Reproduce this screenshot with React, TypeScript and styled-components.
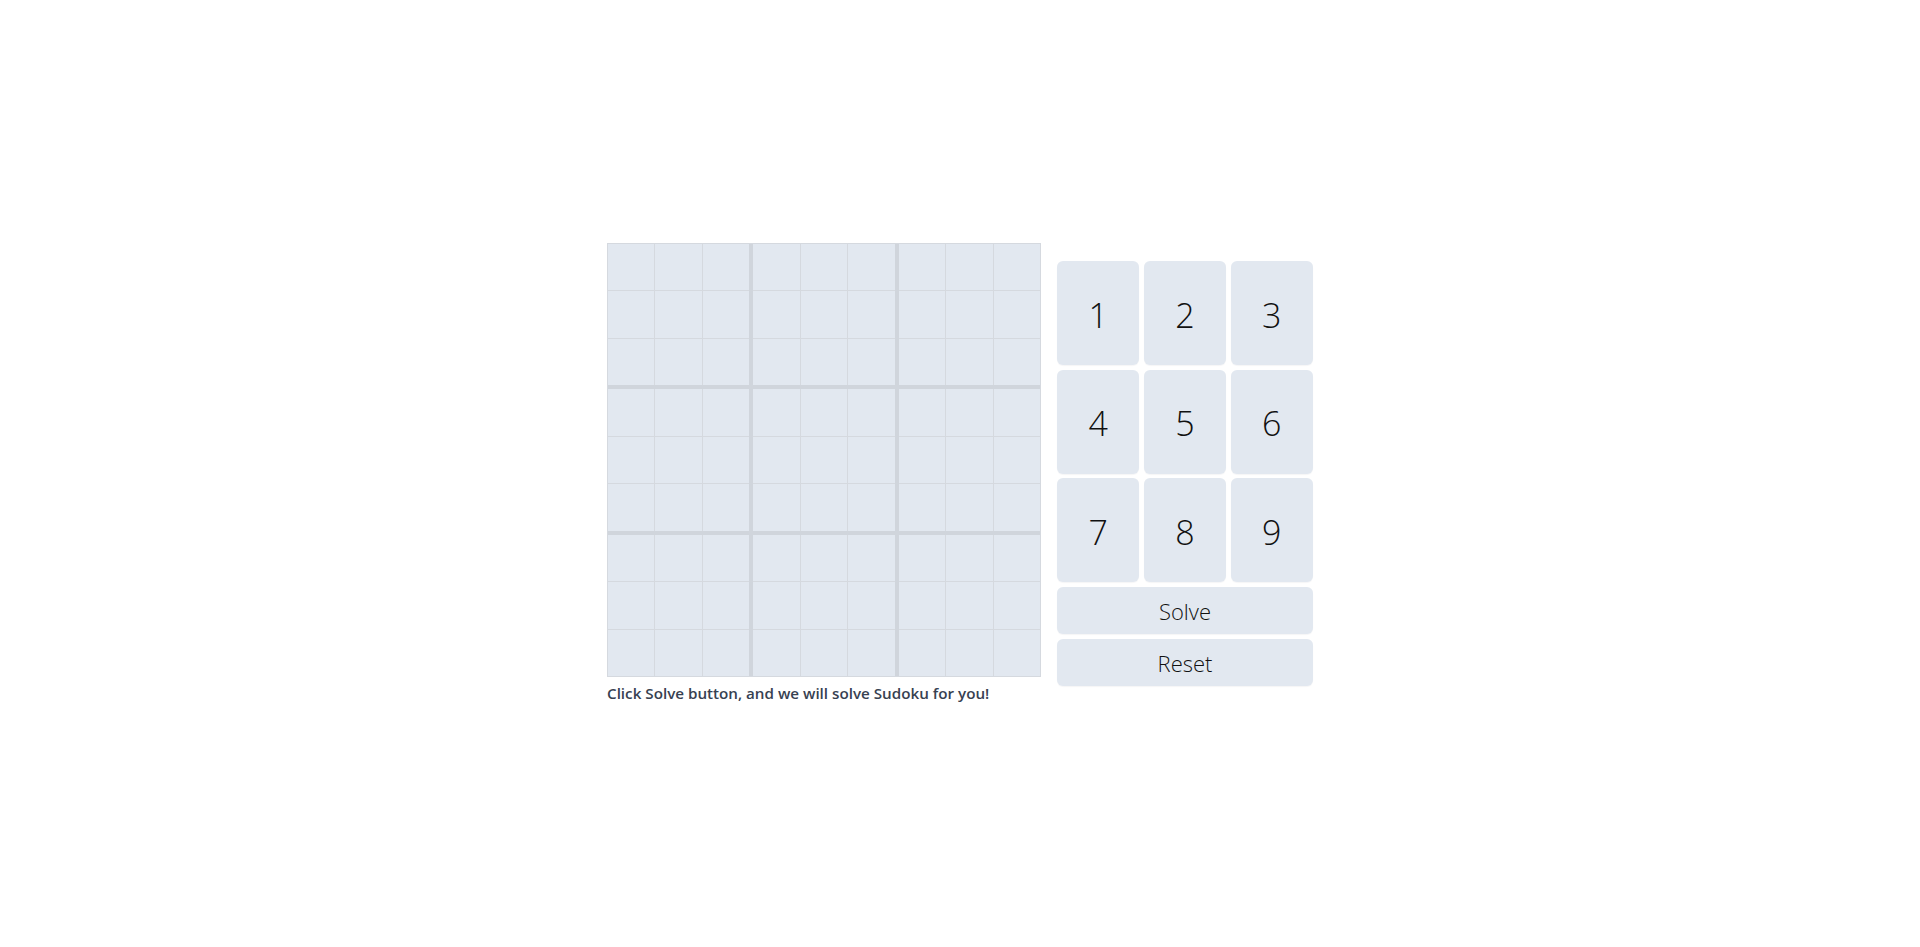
import React from "react";
import styled, { createGlobalStyle } from "styled-components";

const GlobalStyle = createGlobalStyle`
  html, body { margin: 0; padding: 0; background: #ffffff; }
  body { font-family: "Open Sans", "Liberation Sans", sans-serif; }
  * { box-sizing: border-box; }
`;

const Page = styled.main`
  width: 100%;
  height: 947px;
  display: flex;
  align-items: center;
  justify-content: center;
`;

const Layout = styled.div`
  display: flex;
  align-items: center;
  gap: 16px;
`;

const BoardColumn = styled.div`
  display: flex;
  flex-direction: column;
`;

const Board = styled.div`
  width: 434px;
  height: 434px;
  border: 1px solid #d5d9df;
  background: #d0d5dc;
  display: grid;
  grid-template-columns: repeat(3, 1fr);
  grid-template-rows: repeat(3, 1fr);
  gap: 4px;
`;

const Box = styled.div`
  display: grid;
  grid-template-columns: repeat(3, 1fr);
  grid-template-rows: repeat(3, 1fr);
  gap: 1px;
  background: #d5d9df;
`;

const Cell = styled.div`
  background: #e2e8f0;
`;

const Caption = styled.p`
  margin: 5px 0 0;
  font-family: "Open Sans", "Liberation Sans", sans-serif;
  font-weight: 600;
  font-size: 15.2px;
  line-height: 22px;
  color: #374151;
`;

const Pad = styled.div`
  width: 256px;
  display: flex;
  flex-direction: column;
  gap: 4.5px;
`;

const NumberGrid = styled.div`
  display: grid;
  grid-template-columns: repeat(3, 1fr);
  grid-auto-rows: 104px;
  gap: 4.5px;
`;

const PadButton = styled.button<{ $wide?: boolean }>`
  border: none;
  margin: 0;
  padding: ${(p) => (p.$wide ? "1px 0 0" : "3px 0 0")};
  border-radius: 6px;
  background: #e2e8f0;
  color: #111111;
  font-family: "Open Sans", "Liberation Sans", sans-serif;
  font-weight: 300;
  font-size: ${(p) => (p.$wide ? "22px" : "34px")};
  height: ${(p) => (p.$wide ? "47.5px" : "104px")};
  display: flex;
  align-items: center;
  justify-content: center;
  box-shadow: 0 1px 1px rgba(15, 23, 42, 0.04);
  cursor: pointer;
`;

export default function App() {
  const boxes = Array.from({ length: 9 });
  const cells = Array.from({ length: 9 });
  const numbers = [1, 2, 3, 4, 5, 6, 7, 8, 9];
  return (
    <>
      <GlobalStyle />
      <Page>
        <Layout>
          <BoardColumn>
            <Board>
              {boxes.map((_, b) => (
                <Box key={b}>
                  {cells.map((__, c) => (
                    <Cell key={c} />
                  ))}
                </Box>
              ))}
            </Board>
            <Caption>Click Solve button, and we will solve Sudoku for you!</Caption>
          </BoardColumn>
          <Pad>
            <NumberGrid>
              {numbers.map((n) => (
                <PadButton key={n}>{n}</PadButton>
              ))}
            </NumberGrid>
            <PadButton $wide>Solve</PadButton>
            <PadButton $wide>Reset</PadButton>
          </Pad>
        </Layout>
      </Page>
    </>
  );
}
